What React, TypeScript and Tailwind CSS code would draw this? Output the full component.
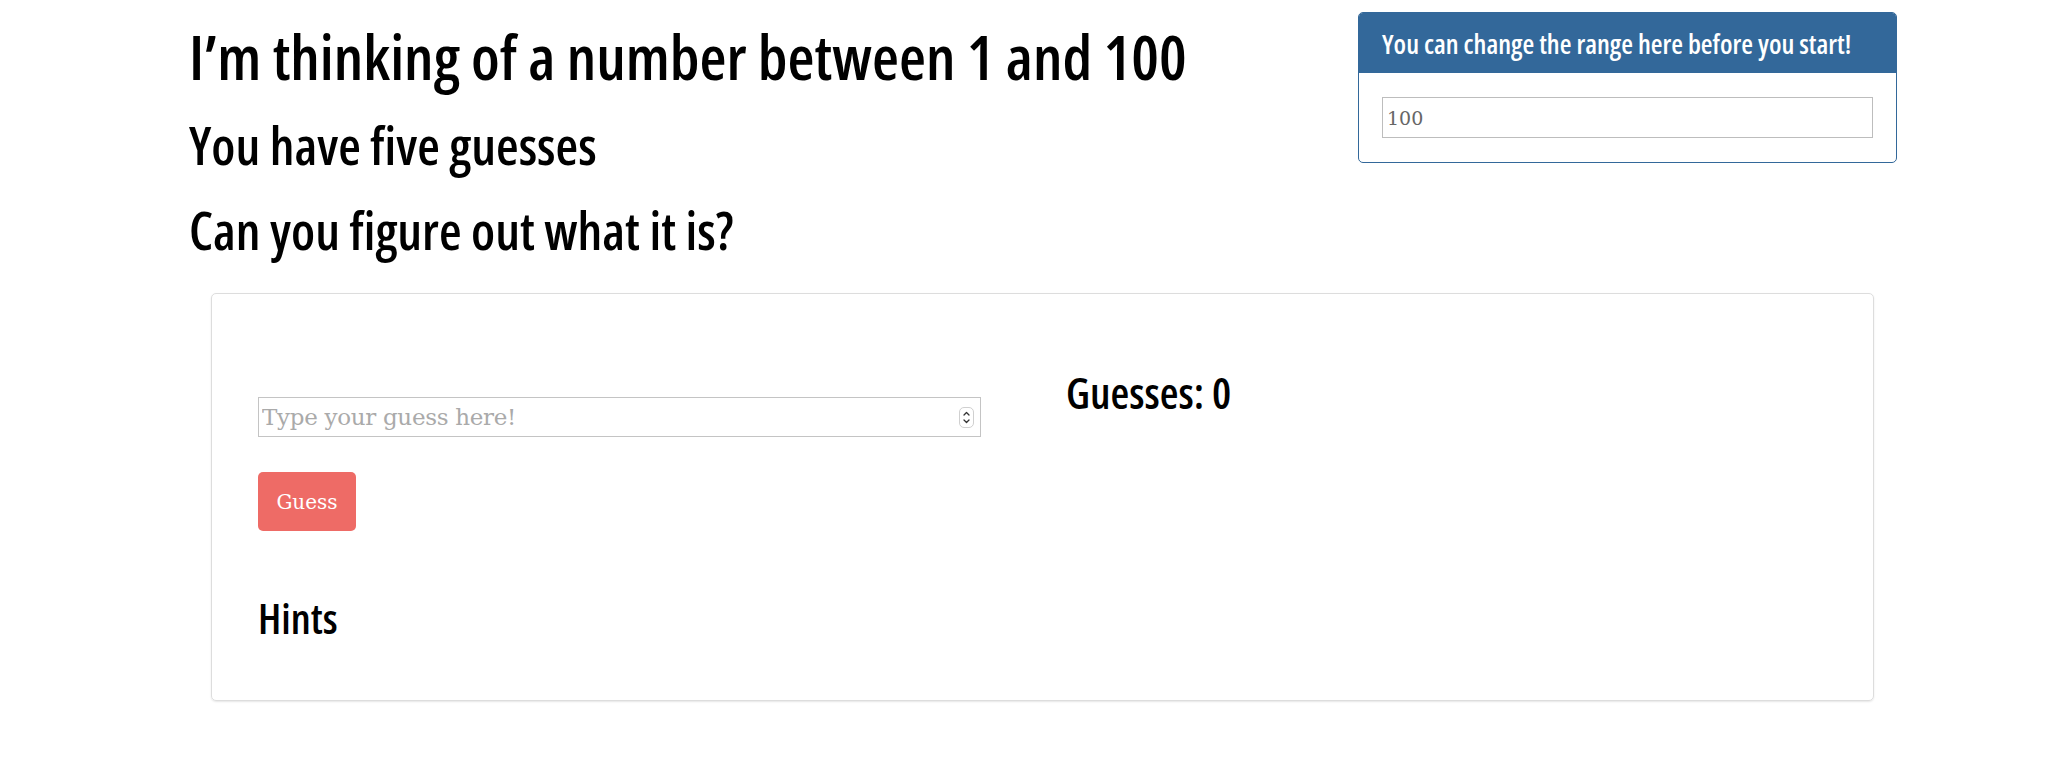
import React from 'react';

// condensed heading face (News Cycle look-alike)
const head = "font-['Open_Sans',sans-serif] font-semibold font-stretch-[75%] leading-none";
const serif = "font-['DejaVu_Serif','Liberation_Serif',serif]";

function Spinner() {
  return (
    <div className="w-[15px] h-[21px] mr-[6px] rounded-[5px] border border-[#d0d0d0] flex items-center justify-center">
      <svg width="9" height="15" viewBox="0 0 9 15" fill="none" stroke="#333" strokeWidth="1.3" strokeLinecap="round" strokeLinejoin="round">
        <path d="M2 5 L4.5 2.5 L7 5" />
        <path d="M2 10 L4.5 12.5 L7 10" />
      </svg>
    </div>
  );
}

export default function App() {
  return (
    <div className="w-[2068px] min-h-[766px] bg-white text-black">
      <div className="flex items-start pl-[189px]">
        <div className="w-[1169px]">
          <h1 className={`${head} mt-[25px] text-[62px] whitespace-nowrap`}>I’m thinking of a number between 1 and 100</h1>
          <h2 className={`${head} mt-[32px] text-[52px]`}>You have five guesses</h2>
          <h2 className={`${head} mt-[33px] text-[52px]`}>Can you figure out what it is?</h2>
        </div>

        <div className="mt-[12px] w-[539px] border border-[#33689a] rounded-[5px] overflow-hidden">
          <div className={`${head} h-[60px] bg-[#33689a] text-white text-[27px] flex items-center pl-[23px] whitespace-nowrap`}>
            You can change the range here before you start!
          </div>
          <div className="px-[23px] py-[24px]">
            <input
              defaultValue="100"
              className={`${serif} w-full h-[41px] border border-[#bdbdbd] px-[4px] text-[19px] text-[#666] outline-none`}
            />
          </div>
        </div>
      </div>

      <div className="ml-[211px] mt-[37px] w-[1663px] border border-[#ddd] rounded-[5px] shadow-[0_1px_2px_rgba(0,0,0,0.1)] pl-[46px] pb-[61px]">
        <div className="flex items-start">
          <div className="w-[723px] mt-[103px]">
            <div className="h-[40px] border border-[#c4c4c4] flex items-center">
              <input
                type="text"
                placeholder="Type your guess here!"
                className={`${serif} flex-1 h-full px-[3px] text-[23px] tracking-[-0.3px] placeholder:text-[#aaa] outline-none`}
              />
              <Spinner />
            </div>
            <button className={`${serif} mt-[35px] w-[98px] h-[59px] rounded-[5px] bg-[#ee6b66] text-white text-[20px]`}>
              Guess
            </button>
          </div>
          <div className={`${head} ml-[85px] mt-[77px] text-[43px]`}>Guesses: 0</div>
        </div>
        <h3 className={`${head} mt-[66px] text-[42px]`}>Hints</h3>
      </div>
    </div>
  );
}
